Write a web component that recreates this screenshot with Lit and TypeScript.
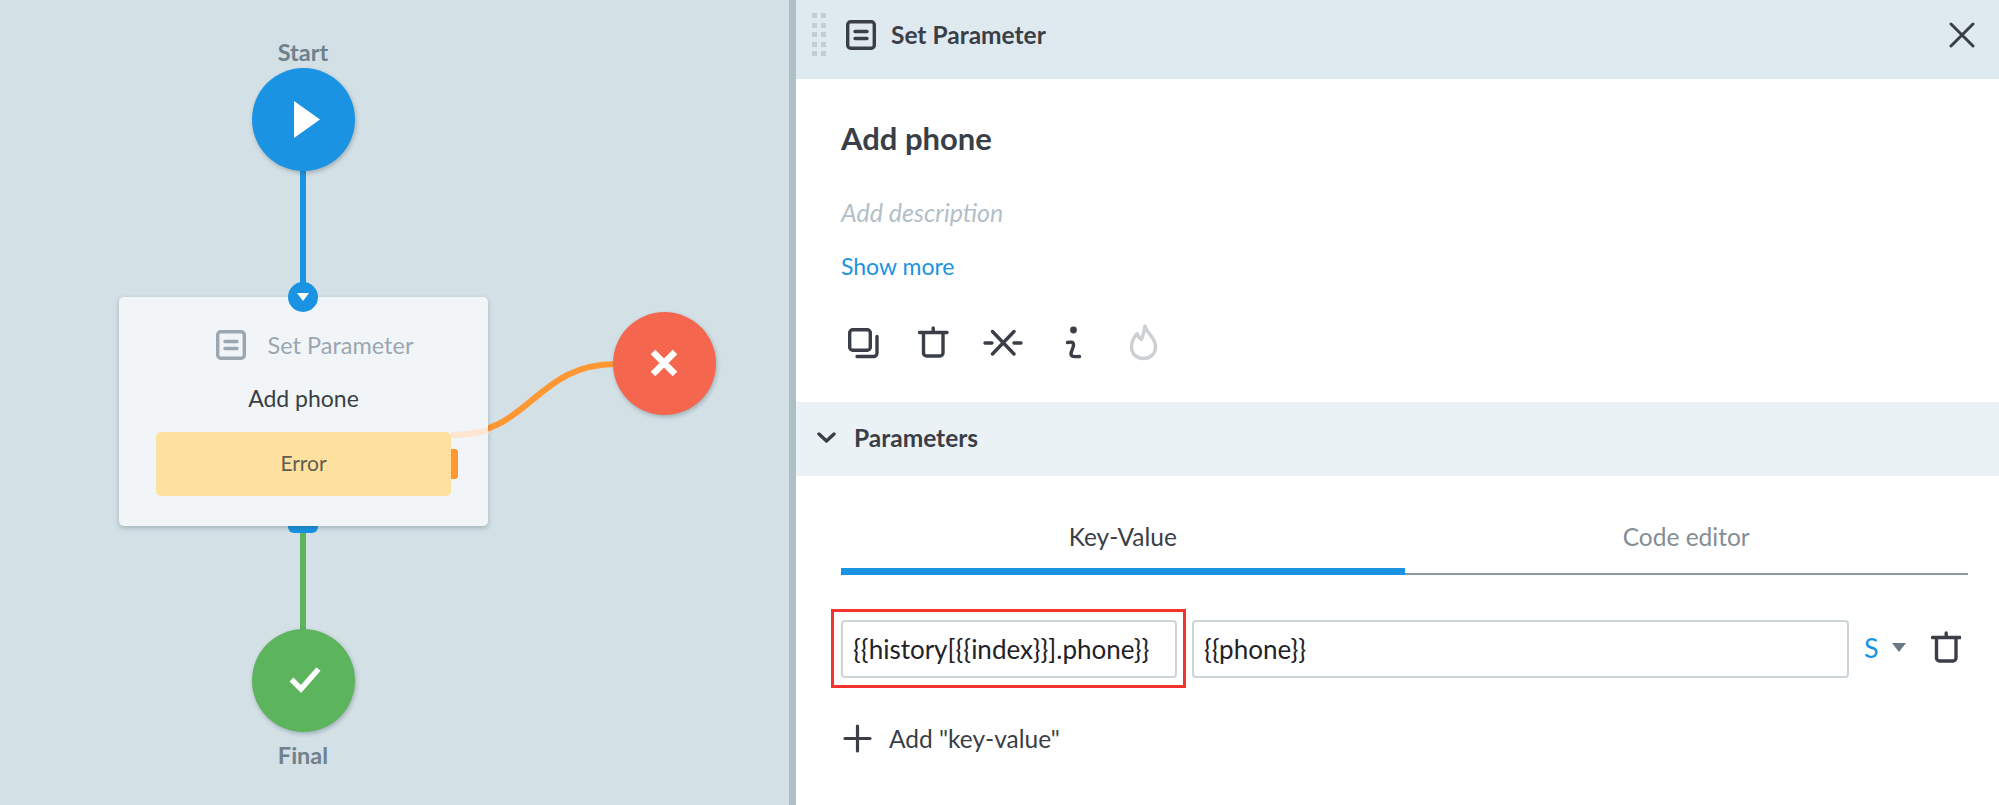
import { LitElement, html, css, svg } from "lit";
import { customElement } from "lit/decorators.js";

const paramIcon = () => html`<svg viewBox="0 0 30 30" width="30" height="30" fill="none" stroke="currentColor" stroke-width="3.4" stroke-linecap="round"><rect x="1.7" y="1.7" width="26.6" height="26.6" rx="3"/><path d="M9 11.5h12M9 18.5h12"/></svg>`;

const trash = svg`<path d="M919.5 332.5h27.5M933.2 328v4M923.5 333v20a3 3 0 0 0 3 3h13.5a3 3 0 0 0 3-3v-20"/>`;

@customElement("app-root")
export class AppRoot extends LitElement {
  static styles = css`
    :host { display: flex; width: 1999px; height: 805px; overflow: hidden; font-family: "Lato", "Noto Sans", sans-serif; color: #3a3f47; background: #fff; }
    .canvas { position: relative; width: 789px; flex: none; background: #d3e0e6; }
    .wires { position: absolute; inset: 0; width: 789px; height: 805px; }
    .wires.over { z-index: 3; pointer-events: none; }
    .label { position: absolute; left: 203px; width: 200px; text-align: center; font-weight: 700; font-size: 23.5px; line-height: 26px; color: #6f818c; }
    .l-start { top: 39px; }
    .l-final { top: 742px; }
    .circle { position: absolute; width: 103px; height: 103px; border-radius: 50%; display: flex; align-items: center; justify-content: center; box-shadow: 1px 2px 4px rgba(40,60,70,.3); z-index: 1; }
    .start { left: 252px; top: 68px; background: #1a93e2; }
    .final { left: 252px; top: 629px; background: #5cb45d; }
    .fail { left: 613px; top: 312px; background: #f5664f; }
    .play { margin-left: 6px; }
    .tick { margin-left: 2px; margin-top: -1px; }
    .cross { margin-left: -2px; margin-top: -1px; }
    .port { position: absolute; left: 288px; top: 282px; width: 30px; height: 30px; border-radius: 50%; background: #1a93e2; z-index: 4; display: flex; align-items: center; justify-content: center; }
    .port-b { position: absolute; left: 288px; top: 520px; width: 30px; height: 13px; border-radius: 0 0 6px 6px; background: #1a93e2; z-index: 1; }
    .card { position: absolute; left: 119px; top: 297px; width: 369px; height: 229px; box-sizing: border-box; padding-top: 33px; background: #f1f5f7; border-radius: 5px; box-shadow: 0 2px 5px rgba(40,60,70,.28); z-index: 2; display: flex; flex-direction: column; align-items: center; }
    .card-head { display: flex; align-items: center; gap: 22px; height: 30px; margin-left: 22px; color: #9aa7b1; font-size: 23.5px; white-space: nowrap; }
    .card-name { margin-top: 23px; margin-bottom: 1px; line-height: 30px; font-size: 23px; color: #3a3f47; transform: none; }
    .err { position: relative; margin-top: 18px; box-sizing: border-box; width: 295px; height: 64px; padding-bottom: 3px; border-radius: 5px; background: #fee09f; color: #5f5c50; font-size: 21px; display: flex; align-items: center; justify-content: center; }
    .handle { position: absolute; left: 295px; top: 17px; width: 7px; height: 30px; border-radius: 0 3px 3px 0; background: #ff9733; }

    .divider { width: 7px; flex: none; background: #afbfc6; }
    .panel { flex: 1; min-width: 0; display: flex; flex-direction: column; }
    .head { box-sizing: border-box; height: 79px; flex: none; background: #dfe9f0; display: flex; align-items: center; padding: 0 24px 9px 16px; font-weight: 700; font-size: 24.5px; }
    .grip { display: grid; grid-template-columns: 5px 5px; grid-auto-rows: 5px; column-gap: 4px; row-gap: 4.5px; align-self: flex-start; margin-top: 13px; margin-right: 20px; }
    .grip i { background: #c0ced6; }
    .head .title { margin-left: 15px; margin-top: -2px; white-space: nowrap; }
    .close { margin-left: auto; }
    .body { padding: 0 31px 0 45px; }
    h1 { margin: 39px 0 0; font-size: 31px; line-height: 40px; font-weight: 700; color: #3a3f47; }
    .desc { margin-top: 39px; font-style: italic; font-size: 25px; line-height: 30px; color: #b2bfc8; }
    .more { margin-top: 24px; font-size: 23px; line-height: 30px; color: #1a93e2; }
    .tools { display: flex; margin-top: 41px; height: 40px; }
    .tools svg { fill: none; stroke: #3a3f47; stroke-width: 3.4; stroke-linecap: round; stroke-linejoin: round; display: block; }
    .tools svg.off { stroke: #cdd0d2; }
    .section { box-sizing: border-box; margin-top: 40px; height: 74px; flex: none; background: #ebf2f6; display: flex; align-items: center; padding: 0 0 4px 21px; gap: 18px; font-size: 24.5px; font-weight: 700; }
    .tabs { display: flex; }
    .tab { flex: 1; box-sizing: border-box; height: 99px; padding-top: 46px; line-height: 30px; text-align: center; font-size: 24.5px; color: #848d94; border-bottom: 2px solid #8a99a4; }
    .tab.on { color: #3a3f47; border-bottom: 7px solid #1a93e2; }
    .row { display: flex; align-items: center; margin-top: 45px; padding-right: 7px; }
    .inp { box-sizing: border-box; height: 58px; border: 2px solid #ccd5da; border-radius: 4px; padding-left: 10px; display: flex; align-items: center; font-size: 26px; color: #1f2226; white-space: nowrap; }
    .k { position: relative; width: 336px; flex: none; }
    .k::after { content: ""; position: absolute; inset: -13px -11px -12px -12px; border: 3px solid #f5322e; }
    .v { flex: 1; margin-left: 15px; }
    .type { margin-left: 15px; font-size: 27px; color: #1a93e2; width: 13px; margin-top: -4px; }
    .caret { margin-left: 15px; margin-top: -4px; display: block; }
    .del { margin-left: 25px; margin-top: -4px; fill: none; stroke: #3a3f47; stroke-width: 3.4; stroke-linecap: round; stroke-linejoin: round; display: block; }
    .add { display: flex; align-items: center; margin-top: 45px; padding-left: 2px; gap: 17px; font-size: 24.5px; height: 30px; color: #3a3f47; }
  `;

  render() {
    return html`
      <div class="canvas">
        <svg class="wires" viewBox="0 0 789 805" fill="none">
          <path d="M303 170V285" stroke="#1a93e2" stroke-width="6"/>
          <path d="M303 530V632" stroke="#5cb45d" stroke-width="6"/>
          <path d="M451 435C530 435 535 364 616 364" stroke="#ff9733" stroke-width="6"/>
        </svg>
        <svg class="wires over" viewBox="0 0 789 805" fill="none">
          <path d="M451 435C474 435 488 430 488 430" stroke="#fde5d2" stroke-width="6"/>
        </svg>
        <div class="label l-start">Start</div>
        <div class="circle start"><svg class="play" width="26" height="37" viewBox="0 0 26 37"><path d="M0 0L26 18.5L0 37Z" fill="#fff"/></svg></div>
        <div class="port"><svg width="12" height="8" viewBox="0 0 12 8"><path d="M0 0H12L6 8Z" fill="#fff"/></svg></div>
        <div class="port-b"></div>
        <div class="card">
          <div class="card-head">${paramIcon()}<span>Set Parameter</span></div>
          <div class="card-name">Add phone</div>
          <div class="err">Error<span class="handle"></span></div>
        </div>
        <div class="circle fail"><svg class="cross" width="28" height="28" viewBox="0 0 28 28"><path d="M3 3L25 25M25 3L3 25" stroke="#fff" stroke-width="6.5"/></svg></div>
        <div class="circle final"><svg class="tick" width="32" height="28" viewBox="0 0 32 28"><path d="M2.5 13.5L12 23L29.5 3" fill="none" stroke="#fff" stroke-width="5.5"/></svg></div>
        <div class="label l-final">Final</div>
      </div>
      <div class="divider"></div>
      <div class="panel">
        <div class="head">
          <div class="grip">${Array.from({ length: 10 }, () => html`<i></i>`)}</div>
          ${paramIcon()}
          <span class="title">Set Parameter</span>
          <svg class="close" width="26" height="26" viewBox="0 0 26 26" fill="none" stroke="#3a3f47" stroke-width="3" stroke-linecap="round"><path d="M2 2L24 24M24 2L2 24"/></svg>
        </div>
        <div class="body">
          <h1>Add phone</h1>
          <div class="desc">Add description</div>
          <div class="more">Show more</div>
          <div class="tools">
            <svg width="52" height="40" viewBox="841 322 52 40"><rect x="849.7" y="329.7" width="20.6" height="20.6" rx="3"/><path d="M877 336.5V353a3.5 3.5 0 0 1-3.5 3.5H857"/></svg>
            <svg width="70" height="40" viewBox="893 322 70 40">${trash}</svg>
            <svg width="80" height="40" viewBox="963 322 80 40"><path d="M985 343h7M1014 343h7M992.5 331.5L1014 354M1014 331.5L992.5 354"/></svg>
            <svg width="60" height="40" viewBox="1043 322 60 40"><circle cx="1073.5" cy="330" r="3.4" fill="#3a3f47" stroke="none"/><path d="M1067.5 342.5c3-.7 6-.8 6 2.5 0 3.5-2.500 5.500-2.500 9 0 3 4 2.700 8.500 2.500"/></svg>
            <svg class="off" width="80" height="40" viewBox="1103 322 80 40"><path d="M1145 326C1147 334 1155.500 337 1155.500 347C1155.500 354 1150 358.500 1143.500 358.500C1137 358.500 1131.500 354 1131.500 347C1131.500 341 1134.500 336.500 1137 333.500C1138 336 1139.500 338.500 1141.500 339.500C1143 335.500 1144.500 331 1145 326Z"/></svg>
          </div>
        </div>
        <div class="section">
          <svg width="19" height="11" viewBox="0 0 19 11" fill="none" stroke="#3a3f47" stroke-width="3.4" stroke-linecap="round" stroke-linejoin="round"><path d="M2 2L9.500 9L17 2"/></svg>
          <span>Parameters</span>
        </div>
        <div class="body">
          <div class="tabs">
            <div class="tab on">Key-Value</div>
            <div class="tab">Code editor</div>
          </div>
          <div class="row">
            <div class="inp k">{{history[{{index}}].phone}}</div>
            <div class="inp v">{{phone}}</div>
            <span class="type">S</span>
            <svg class="caret" width="14" height="9" viewBox="0 0 14 9"><path d="M0 0H14L7 9Z" fill="#6a7a85"/></svg>
            <svg class="del" width="30" height="32" viewBox="918 326 30 32">${trash}</svg>
          </div>
          <div class="add">
            <svg width="29" height="29" viewBox="0 0 29 29" fill="none" stroke="#3a3f47" stroke-width="3.2" stroke-linecap="round"><path d="M14.500 2V27M2 14.500H27"/></svg>
            <span>Add "key-value"</span>
          </div>
        </div>
      </div>
    `;
  }
}
